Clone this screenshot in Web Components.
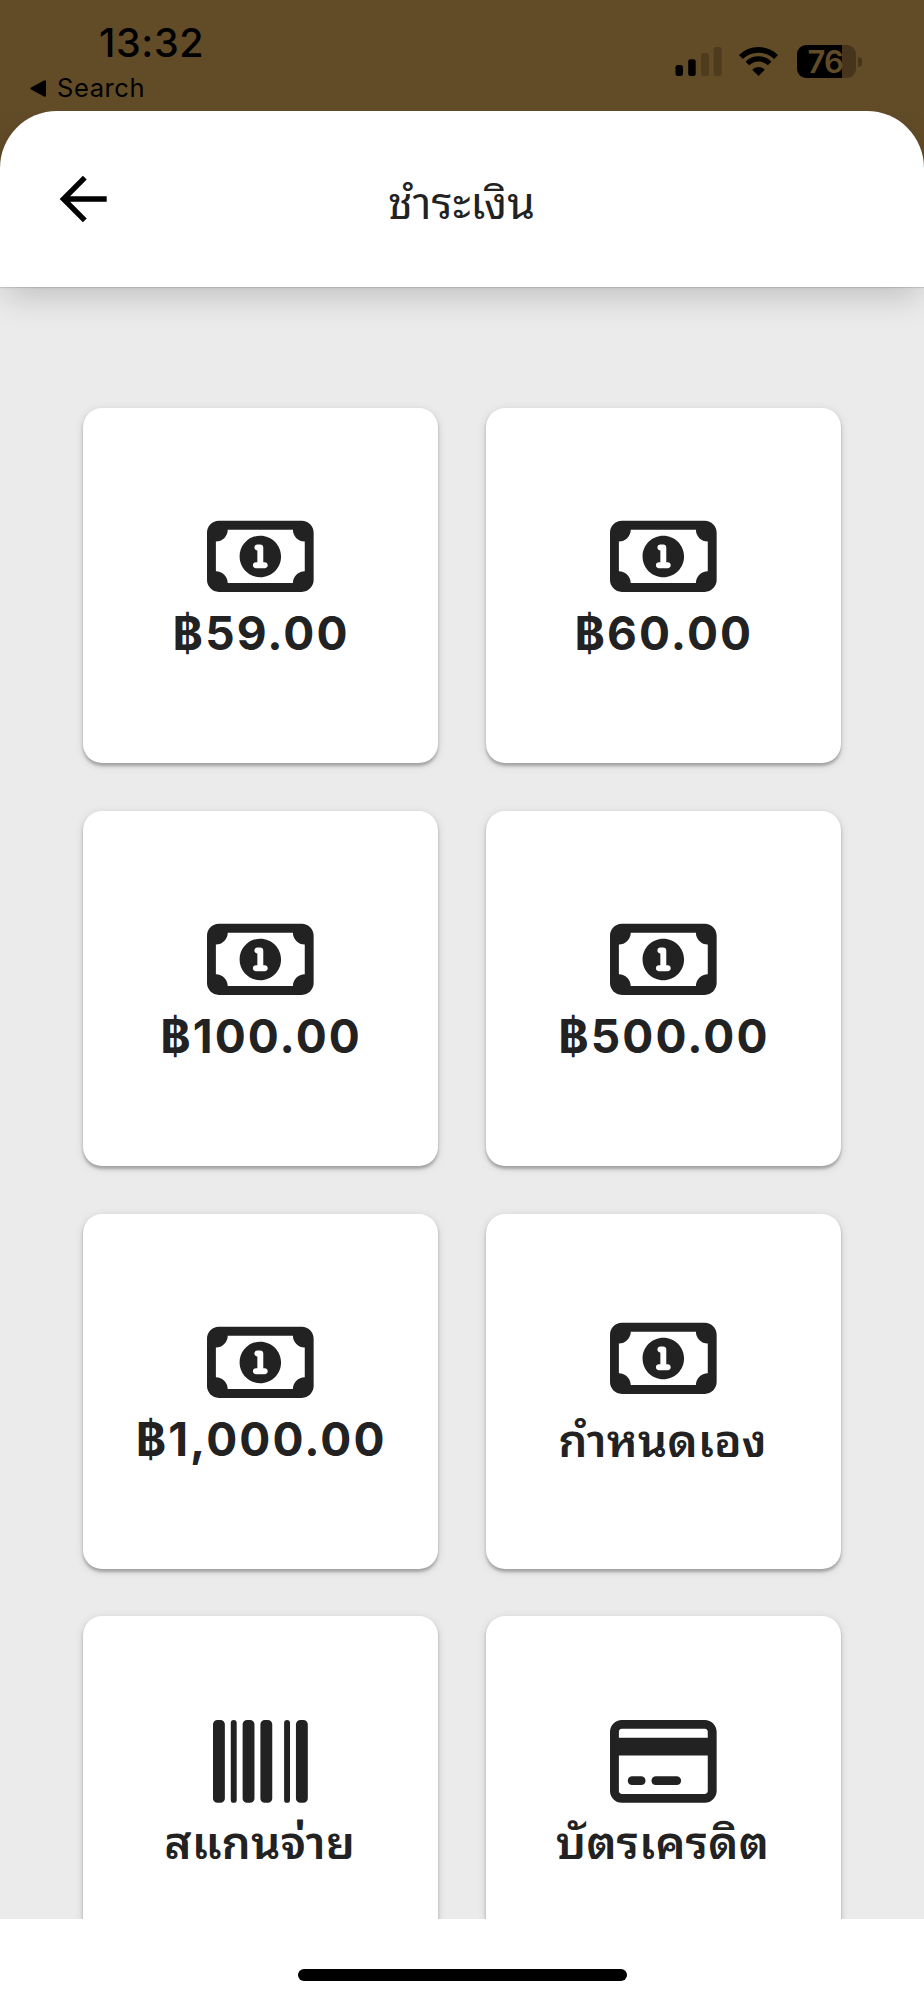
<!DOCTYPE html>
<html lang="th">
<head>
<meta charset="utf-8">
<title>ชำระเงิน</title>
<style>
html,body{margin:0;padding:0}
body{width:924px;height:2000px;overflow:hidden;font-family:Inter,"Noto Sans Thai Looped",Loma,"Noto Serif Thai",Garuda,Umpush,Waree,"Tlwg Typo",sans-serif;background:#624c28}
</style>
</head>
<body>
<pay-screen></pay-screen>
<script>
const define = (name, html) => customElements.define(name, class extends HTMLElement {
  constructor() {
    super();
    const t = document.createElement('template');
    t.innerHTML = html;
    this.attachShadow({ mode: 'open' }).append(t.content.cloneNode(true));
  }
});

define('status-bar', `
<style>
:host{display:flex;justify-content:space-between;height:111px;box-sizing:border-box;padding:24px 62px 0 30px;color:#000}
.left{display:flex;flex-direction:column}
.time{font-size:39.5px;line-height:38px;font-weight:540;letter-spacing:0.6px;padding-left:69px}
.back{display:flex;align-items:center;gap:10px;font-size:25.5px;line-height:32px;margin-top:10px;letter-spacing:.6px}
.right{display:flex;align-items:flex-start;padding-top:21px}
svg{display:block}
.wifi{margin-left:17px}
.batt{display:flex;align-items:center;margin-left:18.5px}
.cell{width:59.5px;height:33px;border-radius:9px;background:linear-gradient(90deg,#000 45px,#46351c 45px);color:#624c28;font-size:31px;font-weight:620;line-height:33px;text-align:center;letter-spacing:-.8px;box-sizing:border-box;padding-right:2px}
.tip{width:4px;height:10px;border-radius:0 5px 5px 0;background:#46351c;margin-left:2px}
</style>
<div class="left"><div class="time">13:32</div>
<div class="back"><svg width="17" height="17" viewBox="0 0 17 17"><path d="M15 1.2v14.6L1.5 8.5z" stroke="#000" stroke-width="2" stroke-linejoin="round"/></svg><span>Search</span></div></div>
<div class="right">
<svg width="47" height="31" viewBox="0 0 47 31"><rect x="0.5" y="20" width="7.5" height="11" rx="2.3"/><rect x="13.2" y="14.3" width="7.5" height="16.7" rx="2.3"/><g fill="#4f3c1f"><rect x="26" y="8" width="8" height="23" rx="2.3"/><rect x="38.7" y="2" width="8" height="29" rx="2.3"/></g></svg>
<svg class="wifi" width="39" height="31" viewBox="0 0 39 31"><g fill="none" stroke="#000"><path d="M1.9 12A25.2 25.2 0 0 1 37.1 12" stroke-width="5.6"/><path d="M8.4 18.5A15.7 15.7 0 0 1 30.6 18.5" stroke-width="5.2"/></g><path d="M19.5 31L13.2 24.7A8.9 8.9 0 0 1 25.8 24.7z"/></svg>
<div class="batt"><div class="cell">76</div><div class="tip"></div></div>
</div>`);

define('app-header', `
<style>
:host{display:grid;grid-template-columns:60px 1fr 60px;align-items:center;height:176px;box-sizing:border-box;padding:0 52px;background:#fff;border-radius:57px 57px 0 0;box-shadow:0 1px 1px rgba(0,0,0,.14),0 12px 34px -4px rgba(0,0,0,.2);position:relative;z-index:1;clip-path:inset(0 0 -80px 0)}
svg{display:block;margin-left:7px}
h1{margin:0;font-size:44.6px;font-weight:400;line-height:60px;color:#222;text-align:center;padding-top:8px;padding-right:1px}
</style>
<svg width="50" height="50" viewBox="0 0 50 50"><path d="M47.7 25H6M25.8 3.6L4.5 25L25.8 46.4" fill="none" stroke="#000" stroke-width="5.4"/></svg>
<h1><slot></slot></h1>`);

const icons = {
  bill: [576, 'M400 256C400 317.9 349.9 368 288 368C226.1 368 176 317.9 176 256C176 194.1 226.1 144 288 144C349.9 144 400 194.1 400 256zM272 224V288H264C255.2 288 248 295.2 248 304C248 312.8 255.2 320 264 320H312C320.8 320 328 312.8 328 304C328 295.2 320.8 288 312 288H304V208C304 199.2 296.8 192 288 192H272C263.2 192 256 199.2 256 208C256 216.8 263.2 224 272 224zM0 128C0 92.65 28.65 64 64 64H512C547.3 64 576 92.65 576 128V384C576 419.3 547.3 448 512 448H64C28.65 448 0 419.3 0 384V128zM48 176V336C83.35 336 112 364.7 112 400H464C464 364.7 492.7 336 528 336V176C492.7 176 464 147.3 464 112H112C112 147.3 83.35 176 48 176z'],
  barcode: [512, 'M24 32H40a24 24 0 0 1 24 24V456a24 24 0 0 1-24 24H24a24 24 0 0 1-24-24V56a24 24 0 0 1 24-24zM112 32a16 16 0 0 1 16 16V464a16 16 0 0 1-32 0V48a16 16 0 0 1 16-16zM184 32H200a24 24 0 0 1 24 24V456a24 24 0 0 1-24 24H184a24 24 0 0 1-24-24V56a24 24 0 0 1 24-24zM280 32H296a24 24 0 0 1 24 24V456a24 24 0 0 1-24 24H280a24 24 0 0 1-24-24V56a24 24 0 0 1 24-24zM400 32a16 16 0 0 1 16 16V464a16 16 0 0 1-32 0V48a16 16 0 0 1 16-16zM472 32H488a24 24 0 0 1 24 24V456a24 24 0 0 1-24 24H472a24 24 0 0 1-24-24V56a24 24 0 0 1 24-24z'],
  card: [576, 'M168 336C181.3 336 192 346.7 192 360C192 373.3 181.3 384 168 384H120C106.7 384 96 373.3 96 360C96 346.7 106.7 336 120 336H168zM360 336C373.3 336 384 346.7 384 360C384 373.3 373.3 384 360 384H248C234.7 384 224 373.3 224 360C224 346.7 234.7 336 248 336H360zM512 32C547.3 32 576 60.65 576 96V416C576 451.3 547.3 480 512 480H64C28.65 480 0 451.3 0 416V96C0 60.65 28.65 32 64 32H512zM512 80H64C55.16 80 48 87.16 48 96V128H528V96C528 87.16 520.8 80 512 80zM528 224H48V416C48 424.8 55.16 432 64 432H512C520.8 432 528 424.8 528 416V224z']
};

customElements.define('pay-tile', class extends HTMLElement {
  connectedCallback() {
    const [w, d] = icons[this.getAttribute('icon')];
    this.attachShadow({ mode: 'open' }).innerHTML = `
<style>
:host{display:flex;flex-direction:column;align-items:center;justify-content:center;height:355.4px;background:#fff;border-radius:19px;box-shadow:0 2.4px 3px rgba(0,0,0,.25),0 2px 10px rgba(0,0,0,.12);color:#222;font-weight:650;font-size:46px;letter-spacing:2.1px}
svg{display:block;height:94.8px}
.label{height:58px;line-height:58px;white-space:nowrap;padding-left:1px}
:host([thai]) .label{height:66px;line-height:69px;font-size:46px;font-weight:600;letter-spacing:0;padding:0 2px 0 0}
</style>
<svg viewBox="0 0 ${w} 512" width="${w * 94.8 / 512}"><path fill="#222" fill-rule="evenodd" d="${d}"/></svg>
<div class="label"><slot></slot></div>`;
  }
});

define('tile-grid', `
<style>
:host{display:grid;grid-template-columns:repeat(2,355.4px);grid-auto-rows:355.4px;gap:47.4px;justify-content:center;align-content:start;padding-top:121px;height:1632px;box-sizing:border-box;background:#ebebeb;overflow:hidden}
</style><slot></slot>`);

define('home-bar', `
<style>
:host{display:flex;justify-content:center;height:81px;background:#fff;box-sizing:border-box;padding-top:50px}
div{width:329px;height:12px;border-radius:6px;background:#000}
</style><div></div>`);

define('pay-screen', `
<style>:host{display:flex;flex-direction:column;height:2000px;width:924px}</style>
<status-bar></status-bar>
<app-header>ชำระเงิน</app-header>
<tile-grid>
<pay-tile icon="bill">฿59.00</pay-tile>
<pay-tile icon="bill">฿60.00</pay-tile>
<pay-tile icon="bill">฿100.00</pay-tile>
<pay-tile icon="bill">฿500.00</pay-tile>
<pay-tile icon="bill">฿1,000.00</pay-tile>
<pay-tile icon="bill" thai>กำหนดเอง</pay-tile>
<pay-tile icon="barcode" thai>สแกนจ่าย</pay-tile>
<pay-tile icon="card" thai>บัตรเครดิต</pay-tile>
</tile-grid>
<home-bar></home-bar>`);
</script>
</body>
</html>
